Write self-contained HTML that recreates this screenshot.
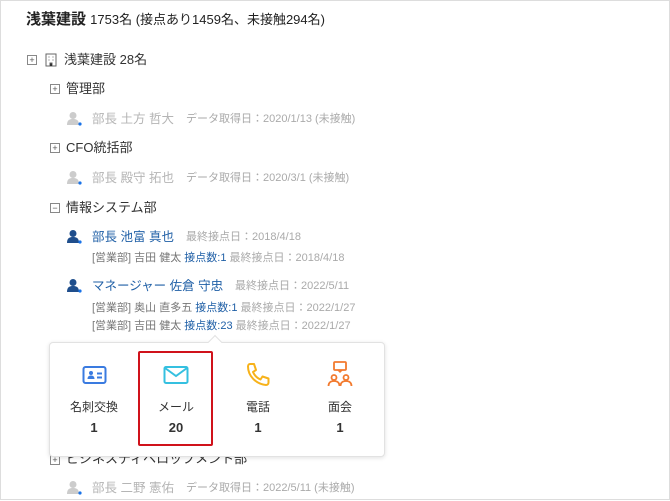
<!DOCTYPE html>
<html><head><meta charset="utf-8"><style>
body{margin:0;width:670px;height:501px;overflow:hidden;background:#fff;font-family:"Liberation Sans","Noto Sans CJK JP",sans-serif;position:relative}
.frame{position:absolute;left:0;top:0;width:668px;height:498px;border:1px solid #ddd}
.a{position:absolute;white-space:nowrap;line-height:1}
.box{position:absolute;width:8px;height:8px;border:1px solid #888;font-size:9px;line-height:8px;text-align:center;color:#555}
.g{color:#b5b5b5}
.b{color:#1f5fa6}
.s{font-size:11px;color:#aaa}
.d{font-size:11px;color:#777}
</style></head><body>
<div class="frame"></div>
<div class="a" style="left:26px;top:12px;font-size:15px;font-weight:bold;color:#222">浅葉建設 <span style="font-weight:normal;font-size:13px">1753名 (接点あり1459名、未接触294名)</span></div>

<div class="box" style="left:27px;top:55px">+</div>
<svg class="a" style="left:45px;top:53px" width="12" height="14" viewBox="0 0 12 14"><rect x="1" y="1" width="10" height="12" fill="none" stroke="#666"/><path d="M3.5 4h1M7.5 4h1M3.5 7h1M7.5 7h1M5 13v-3h2v3" stroke="#666"/></svg>
<div class="a" style="left:64px;top:53px;font-size:13px;color:#333">浅葉建設 28名</div>

<div class="box" style="left:50px;top:84px">+</div>
<div class="a" style="left:66px;top:82px;font-size:13px;color:#333">管理部</div>

<svg class="a" style="left:67px;top:111px" width="15" height="15"><circle cx="6" cy="4.5" r="3.5" fill="#ccc"/><path d="M0 14c0-5 2.5-6 6-6s6 1 6 6z" fill="#ccc"/><circle cx="13" cy="13" r="1.6" fill="#1a73e8"/></svg>
<div class="a g" style="left:92px;top:113px;font-size:12.5px">部長 土方 哲大</div>
<div class="a s" style="left:186px;top:114px">データ取得日：2020/1/13 (未接触)</div>

<div class="box" style="left:50px;top:143px">+</div>
<div class="a" style="left:66px;top:141px;font-size:13px;color:#333">CFO統括部</div>

<svg class="a" style="left:67px;top:170px" width="15" height="15"><circle cx="6" cy="4.5" r="3.5" fill="#ccc"/><path d="M0 14c0-5 2.5-6 6-6s6 1 6 6z" fill="#ccc"/><circle cx="13" cy="13" r="1.6" fill="#1a73e8"/></svg>
<div class="a g" style="left:92px;top:172px;font-size:12.5px">部長 殿守 拓也</div>
<div class="a s" style="left:186px;top:173px">データ取得日：2020/3/1 (未接触)</div>

<div class="box" style="left:50px;top:203px">−</div>
<div class="a" style="left:66px;top:201px;font-size:13px;color:#333">情報システム部</div>

<svg class="a" style="left:67px;top:229px" width="15" height="15"><circle cx="6" cy="4.5" r="3.5" fill="#1f4e8c"/><path d="M0 14c0-5 2.5-6 6-6s6 1 6 6z" fill="#1f4e8c"/><circle cx="13" cy="13" r="1.6" fill="#1a73e8"/></svg>
<div class="a b" style="left:92px;top:231px;font-size:12.5px">部長 池富 真也</div>
<div class="a s" style="left:186px;top:232px">最終接点日：2018/4/18</div>
<div class="a d" style="left:92px;top:253px">[営業部] 吉田 健太 <span class="b">接点数:1</span> <span style="color:#aaa">最終接点日：2018/4/18</span></div>

<svg class="a" style="left:67px;top:278px" width="15" height="15"><circle cx="6" cy="4.5" r="3.5" fill="#1f4e8c"/><path d="M0 14c0-5 2.5-6 6-6s6 1 6 6z" fill="#1f4e8c"/><circle cx="13" cy="13" r="1.6" fill="#1a73e8"/></svg>
<div class="a b" style="left:92px;top:280px;font-size:12.5px">マネージャー 佐倉 守忠</div>
<div class="a s" style="left:235px;top:281px">最終接点日：2022/5/11</div>
<div class="a d" style="left:92px;top:303px">[営業部] 奥山 直多五 <span class="b">接点数:1</span> <span style="color:#aaa">最終接点日：2022/1/27</span></div>
<div class="a d" style="left:92px;top:321px">[営業部] 吉田 健太 <span class="b">接点数:23</span> <span style="color:#aaa">最終接点日：2022/1/27</span></div>

<div class="box" style="left:50px;top:455px">+</div>
<div class="a" style="left:66px;top:452px;font-size:13px;color:#333">ビジネスディベロップメント部</div>
<svg class="a" style="left:67px;top:480px" width="15" height="15"><circle cx="6" cy="4.5" r="3.5" fill="#ccc"/><path d="M0 14c0-5 2.5-6 6-6s6 1 6 6z" fill="#ccc"/><circle cx="13" cy="13" r="1.6" fill="#1a73e8"/></svg>
<div class="a g" style="left:92px;top:482px;font-size:12.5px">部長 二野 憲佑</div>
<div class="a s" style="left:186px;top:483px">データ取得日：2022/5/11 (未接触)</div>

<div style="position:absolute;left:49px;top:342px;width:334px;height:113px;background:#fff;border:1px solid #e2e2e2;border-radius:4px;box-shadow:0 1px 4px rgba(0,0,0,.12)"></div>
<div style="position:absolute;left:210px;top:337px;width:9px;height:9px;background:#fff;border-left:1px solid #e2e2e2;border-top:1px solid #e2e2e2;transform:rotate(45deg)"></div>
<div style="position:absolute;left:138px;top:351px;width:71px;height:91px;border:2px solid #d0121b;border-radius:2px"></div>

<svg class="a" style="left:82px;top:365px" width="25" height="20" viewBox="0 0 25 20"><rect x="1.5" y="2" width="22" height="16" rx="2" fill="none" stroke="#3a7be0" stroke-width="2"/><circle cx="9" cy="8" r="2" fill="#3a7be0"/><path d="M5.5 14c0-3 2-3.5 3.5-3.5s3.5.5 3.5 3.5z" fill="#3a7be0"/><path d="M15 8.5h5M15 12.5h5" stroke="#3a7be0" stroke-width="2"/></svg>
<svg class="a" style="left:163px;top:365px" width="26" height="20" viewBox="0 0 26 20"><rect x="1.5" y="2" width="23" height="16" rx="1.5" fill="none" stroke="#35c0e0" stroke-width="2"/><path d="M2 3l11 8 11-8" fill="none" stroke="#35c0e0" stroke-width="2"/></svg>
<svg class="a" style="left:245px;top:362px" width="26" height="26" viewBox="0 0 26 26"><path d="M5 2l4 0 2 6-3 2c1.5 3.5 4 6 7.5 7.5l2-3 6 2v4c0 1.5-1 2.5-2.5 2.5C11 22 3 14 3 4.5 3 3 3.8 2 5 2z" fill="none" stroke="#f7b21a" stroke-width="2" stroke-linejoin="round"/></svg>
<svg class="a" style="left:327px;top:361px" width="26" height="28" viewBox="0 0 26 28"><rect x="7" y="1" width="12" height="8" rx="1" fill="none" stroke="#f27a2e" stroke-width="1.8"/><path d="M11 9l2 2 2-2" fill="none" stroke="#f27a2e" stroke-width="1.5"/><circle cx="7" cy="16.5" r="2.5" fill="none" stroke="#f27a2e" stroke-width="1.8"/><circle cx="19" cy="16.5" r="2.5" fill="none" stroke="#f27a2e" stroke-width="1.8"/><path d="M1.5 25c0-3.5 2.5-5 5.5-5s5.5 1.5 5.5 5M13.5 25c0-3.5 2.5-5 5.5-5s5.5 1.5 5.5 5" fill="none" stroke="#f27a2e" stroke-width="1.8"/></svg>

<div class="a" style="left:54px;width:80px;text-align:center;top:401px;font-size:12px;color:#333">名刺交換</div>
<div class="a" style="left:136px;width:80px;text-align:center;top:401px;font-size:12px;color:#333">メール</div>
<div class="a" style="left:218px;width:80px;text-align:center;top:401px;font-size:12px;color:#333">電話</div>
<div class="a" style="left:300px;width:80px;text-align:center;top:401px;font-size:12px;color:#333">面会</div>
<div class="a" style="left:54px;width:80px;text-align:center;top:421px;font-size:13px;font-weight:bold;color:#333">1</div>
<div class="a" style="left:136px;width:80px;text-align:center;top:421px;font-size:13px;font-weight:bold;color:#333">20</div>
<div class="a" style="left:218px;width:80px;text-align:center;top:421px;font-size:13px;font-weight:bold;color:#333">1</div>
<div class="a" style="left:300px;width:80px;text-align:center;top:421px;font-size:13px;font-weight:bold;color:#333">1</div>
</body></html>
